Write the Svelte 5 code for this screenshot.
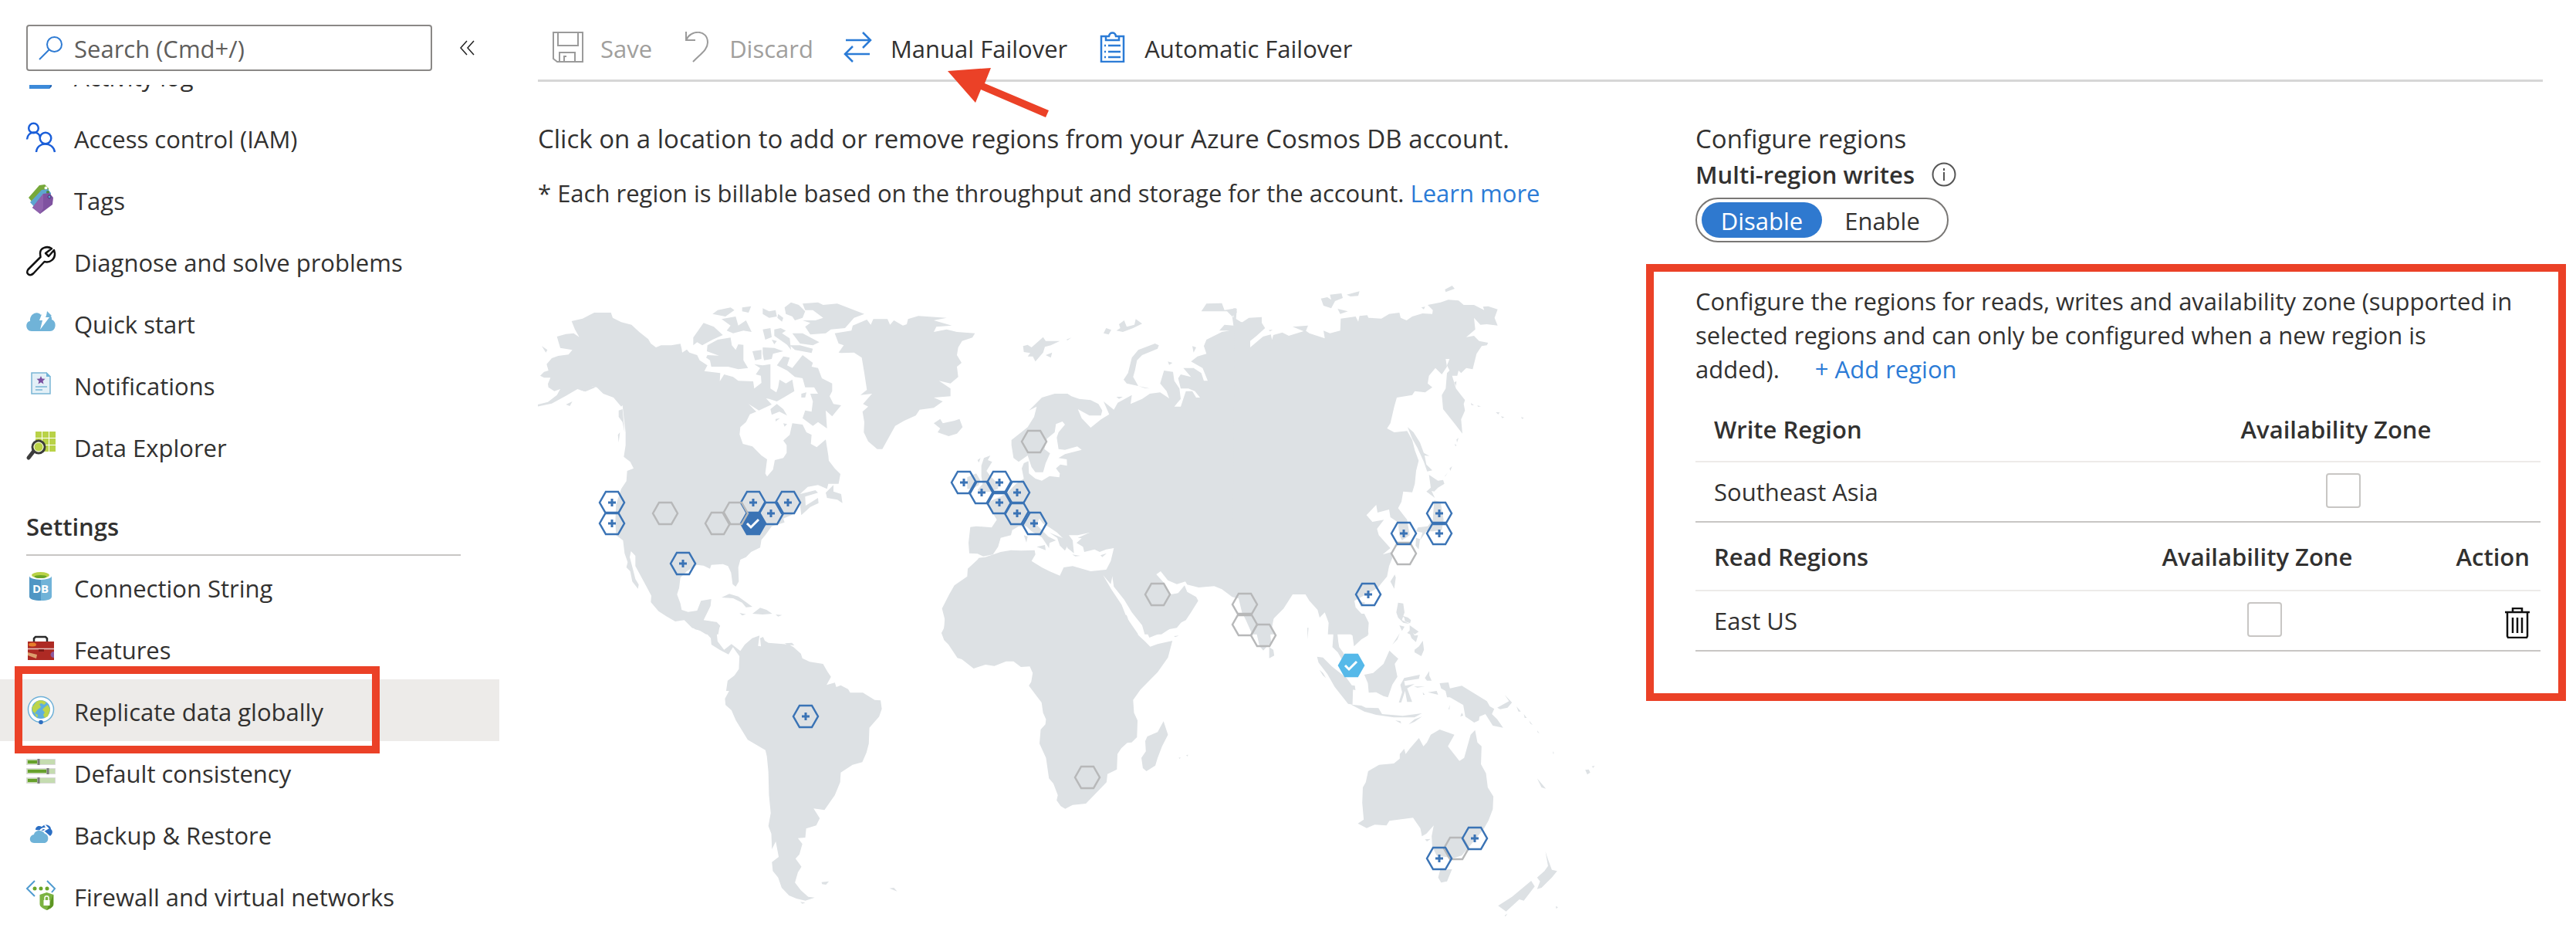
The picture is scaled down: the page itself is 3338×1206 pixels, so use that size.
<script>
  const general = [
    { icon: 'log', label: 'Activity log' },
    { icon: 'iam', label: 'Access control (IAM)' },
    { icon: 'tags', label: 'Tags' },
    { icon: 'wrench', label: 'Diagnose and solve problems' },
    { icon: 'cloud', label: 'Quick start' },
    { icon: 'note', label: 'Notifications' },
    { icon: 'explorer', label: 'Data Explorer' }
  ];
  const settings = [
    { icon: 'db', label: 'Connection String' },
    { icon: 'case', label: 'Features' },
    { icon: 'globe', label: 'Replicate data globally', active: true },
    { icon: 'sliders', label: 'Default consistency' },
    { icon: 'backup', label: 'Backup & Restore' },
    { icon: 'firewall', label: 'Firewall and virtual networks' }
  ];

  // Map canvas size and the markers on it: [x, y, kind]
  const mapW = 1436;
  const mapH = 846;
  const markers = [
    [96, 291, 'open'], [96, 318, 'open'], [165, 305, 'off'],
    [279, 291, 'open'], [302, 305, 'open'], [324, 291, 'open'], [279, 318, 'read'],
    [233, 318, 'off'], [256, 305, 'off'], [188, 370, 'open'],
    [552, 265, 'open'], [575, 278, 'open'], [598, 265, 'open'], [621, 278, 'open'],
    [598, 291, 'open'], [621, 305, 'open'], [643, 318, 'open'], [643, 212, 'off'],
    [803, 410, 'off'], [916, 423, 'off'], [916, 449, 'off'], [940, 463, 'off'],
    [1168, 305, 'open'], [1168, 331, 'open'], [1122, 357, 'off'], [1122, 331, 'open'],
    [1076, 410, 'open'], [347, 568, 'open'], [712, 647, 'off'], [1054, 502, 'write'],
    [1190, 739, 'off'], [1214, 726, 'open'], [1168, 752, 'open']
  ];

  let multi = $state('disable');
  let search = $state('');
</script>

{#snippet navIcon(name)}
  <svg class="nav-icon" viewBox="0 0 38 38" aria-hidden="true">
    {#if name === 'log'}
      <path fill="#3c8ad9" d="M4 2h29v30l-3 4H4z" /><path fill="#1f5fae" d="M30 36l1-4 2-1v2z" />
    {:else if name === 'iam'}
      <g fill="none" stroke="#1b5fd9" stroke-width="2.5">
        <circle cx="9.5" cy="7" r="6.3" /><path d="M1 21.500C2 10 17 10 18 19" />
        <circle cx="25" cy="20" r="7.300" /><path d="M13 38c1-14 22-14 24 0" />
      </g>
    {:else if name === 'tags'}
      <path fill="#76a83a" d="M3 17L17 1l7-1 5 5v10L12 28z" /><circle cx="25.500" cy="4.500" r="2" fill="#fff" />
      <path fill="#5ea5d0" d="M5 23L20 7l8-1 4 5v10L13 32z" /><circle cx="28" cy="10" r="2" fill="#4d8a3a" />
      <path fill="#7f52a0" d="M8 30l14-18 8-1 5 6-1 9-16 12z" /><path fill="#8f62ad" d="M8 30l14-18v19l-4 7z" /><circle cx="30" cy="16" r="2" fill="#5ea5d0" stroke="#4b2f77" />
    {:else if name === 'wrench'}
      <path fill="none" stroke="#111" stroke-width="2.500" stroke-linejoin="round" d="M33 3C27-1 18 2 18 9l.5 5L2.500 30c-4 5 2 10 7 5l14-15c8 2 14-4 13.500-11L36 5l-7 8-4-4z" />
    {:else if name === 'cloud'}
      <path fill="#70b3d8" d="M7 30C-1 30-2 18 5 17 4 7 15 3 19 9c6-5 15-1 14 6 7 2 6 15-2 15z" />
      <path fill="#fff" d="M22 3l-5 13h4l-3 12 12-16h-5l4-9z" /><path fill="#70b3d8" d="M27 4l6 6-7 1z" />
    {:else if name === 'note'}
      <path fill="#e3f0f7" stroke="#7ab5d5" stroke-width="1.500" d="M7 4h19l5 5v22H7z" /><path fill="#70b3d8" d="M26 3l6 6h-6z" />
      <path fill="#7a4fa0" d="M19 8l1.500 3.500 4 .3-3 2.700 1 4L19 16.300l-3.500 2.200 1-4-3-2.700 4-.3z" />
      <path stroke="#7ab5d5" stroke-width="1.500" d="M12 22h15M12 26h9" />
    {:else if name === 'explorer'}
      <path fill="#b9d247" d="M12 0h8v8h-8zM21 0h8v8h-8zM30 0h8v8h-8zM21 9h8v8h-8zM30 9h8v8h-8zM30 18h8v8h-8zM21 18h8v8h-8zM12 9h8v8h-8z" />
      <path stroke="#3c3c3c" stroke-width="5" stroke-linecap="round" d="M3 34l7-9" /><circle cx="16" cy="20" r="8" fill="#b9d247" stroke="#3c3c3c" stroke-width="3" /><circle cx="16" cy="20" r="6" fill="none" stroke="#fff" />
    {:else if name === 'db'}
      <path fill="#4f96c4" d="M4 5h15v32C10 37 4 35 4 32z" /><path fill="#70b3d8" d="M19 5h14v27c0 3-5 5-14 5z" />
      <ellipse cx="18.500" cy="5" rx="14.500" ry="5" fill="#fff" /><ellipse cx="18.500" cy="4" rx="11.500" ry="4" fill="#b9d247" /><ellipse cx="18.500" cy="6" rx="8" ry="2" fill="#6aa52a" />
      <text x="18.500" y="27" class="db-text" text-anchor="middle">DB</text>
    {:else if name === 'case'}
      <path fill="none" stroke="#2a2a2a" stroke-width="2.500" d="M10 12V6l2-2h13l2 2v6" /><path fill="#ae2a24" d="M2 10h34v24H2z" />
      <path stroke="#e8c7c5" stroke-width="1.500" d="M2 19.500h34" /><ellipse cx="8" cy="14" rx="5" ry="2.500" fill="#e77e2c" /><path fill="#dc9f6d" d="M2 24l12 3-1 5L2 28z" /><path fill="#8c5a9e" d="M36 23c-6 0-6 8 0 8z" /><path fill="#7d1a17" d="M16 20h7v3h-7z" />
    {:else if name === 'globe'}
      <circle cx="19" cy="18" r="16.500" fill="#fff" stroke="#6fb1d8" stroke-width="1.500" /><circle cx="19" cy="18" r="12" fill="#5eaede" />
      <path fill="#bcd54a" d="M13 8c4-3 10-2 13 1l-3 3-3-2-3 1 2 4-4 3-4 5-3-3-.5-5zM28 12l3 6-3 9-4 2-2-4 2-3-3-4 3-3z" /><path fill="#bcd54a" d="M11 23l4 2-1 4z" />
      <circle cx="19" cy="34.500" r="2.800" fill="#2f6fc0" />
    {:else if name === 'sliders'}
      <path fill="#c5dcb0" stroke="#d9d9d9" d="M.5 2.500h37v7H.5zM.5 14.500h37v7H.5zM.5 26.500h37v7H.5z" />
      <path fill="#66a02c" d="M2 4h12v4H2zM2 16h24v4H2zM2 28h12v4H2z" /><path stroke="#7b7b7b" stroke-width="3" d="M16 2v8M28 14v8M16 26v8" />
    {:else if name === 'backup'}
      <path fill="#2b6fc4" d="M12 14c0-5 5-6 8-4 5-5 12-2 12 3 3 2 2 7-1 9l-8-7z" /><path fill="none" stroke="#fff" stroke-width="2" d="M17 18c1-5 5-7 11-6M24 8l4 4-5 3" />
      <path fill="#6fb3d8" d="M10 31c-7 0-7-10 0-11 1-6 11-7 14-1 6 1 6 12-1 12z" />
    {:else if name === 'firewall'}
      <path fill="none" stroke="#4f9bd0" stroke-width="2" d="M11 0L1 10l10 10M27 0l10 10-4 5" /><g fill="#6aa52a"><circle cx="11" cy="10" r="2.500" /><circle cx="19" cy="10" r="2.500" /><circle cx="27" cy="10" r="2.500" /></g>
      <path fill="#7cb342" d="M26.500 15l9 3v12c0 4-5 6-9 8-4-2-9-4-9-8V18z" /><path fill="#5d9522" d="M35 18v12c0 4-4 6-8.500 8z" /><path fill="#fff" d="M22.500 25h8v7h-8z" /><path fill="none" stroke="#fff" stroke-width="1.500" d="M24 25v-3c0-3 5-3 5 0v3" />
    {/if}
  </svg>
{/snippet}

{#snippet navItem(item)}
  <li class:active={item.active}>
    <a href="#{item.icon}" aria-current={item.active ? 'page' : undefined}>{@render navIcon(item.icon)}<span>{item.label}</span></a>
    {#if item.active}<span class="outline"></span>{/if}
  </li>
{/snippet}

<div class="page">
  <aside>
    <div class="search-row">
      <label class="search">
        <svg viewBox="0 0 32 32" aria-hidden="true"><g fill="none" stroke="#2f7bd3" stroke-width="2"><circle cx="20.500" cy="11.500" r="9.500" /><path d="M14 18L1 31" /></g></svg>
        <input type="text" placeholder="Search (Cmd+/)" aria-label="Search" bind:value={search} />
      </label>
      <button class="collapse" aria-label="Collapse menu">
        <svg viewBox="0 0 20 20" aria-hidden="true"><path fill="none" stroke="#222" stroke-width="1.500" d="M9 1L1 10l8 9M18 1l-8 9 8 9" /></svg>
      </button>
    </div>
    <nav>
      <ul class="general">
        {#each general as item}{@render navItem(item)}{/each}
      </ul>
      <h2>Settings</h2>
      <ul>
        {#each settings as item}{@render navItem(item)}{/each}
      </ul>
    </nav>
  </aside>

  <main>
    <div class="toolbar">
      <button disabled>
        <svg viewBox="0 0 40 40" aria-hidden="true"><g fill="none" stroke="#9b9b9b" stroke-width="2"><path d="M1 1h38v38H6l-5-4zM7 1v17h26V1M9 39V27h20v12M15 39v-7h3" /></g></svg>
        <span>Save</span>
      </button>
      <button disabled>
        <svg viewBox="0 0 40 40" aria-hidden="true"><path fill="none" stroke="#9b9b9b" stroke-width="2" d="M6 0v11h12M6 11c6-14 28-14 28 3 0 9-8 14-19 25" /></svg>
        <span>Discard</span>
      </button>
      <button>
        <svg viewBox="0 0 40 40" aria-hidden="true"><path fill="none" stroke="#2b7bd6" stroke-width="2.500" d="M4 11h32M26 1l10 10-10 10M35 29H3M13 19L3 29l10 10" /></svg>
        <span>Manual Failover</span>
        <svg class="arrow" viewBox="0 0 132 66" aria-hidden="true"><path fill="#eb4127" d="M0 5L56 1l-8 20 83 35-4 9-84-36-7 17z" /></svg>
      </button>
      <button>
        <svg viewBox="0 0 40 40" aria-hidden="true"><g fill="none" stroke="#2b7bd6" stroke-width="2.500"><path d="M14 6H6v33h29V6h-8M12 6v5h17V6h-4c-1-6-8-6-9 0zM15 18h16M15 26h16M15 33h16M10 18h2M10 26h2M10 33h2" /></g></svg>
        <span>Automatic Failover</span>
      </button>
    </div>

    <div class="columns">
      <section class="map-side">
        <p class="lead">Click on a location to add or remove regions from your Azure Cosmos DB account.</p>
        <p class="note">* Each region is billable based on the throughput and storage for the account. <a href="#learn">Learn more</a></p>
        <div class="map">
          <svg class="world" viewBox="7 0 {mapW} {mapH}" role="img" aria-label="World map">
            <!-- North America and Greenland -->
            <g transform="scale(.33333)">
              <path d="M18 500L20 492 60 482 95 455 108 432 85 440 62 425 60 412 70 388 45 388 30 380 45 365 62 360 55 335 75 312 100 303 140 298 155 280 108 272 95 228 130 218 160 215 182 230 165 200 152 168 195 158 240 135 305 135 312 155 345 172 385 182 415 210 450 238 460 255 480 270 500 262 540 262 575 256 580 275 582 290 600 278 610 290 640 300 650 320 680 340 668 362 730 370 728 402 745 375 780 385 800 400 858 402 862 430 890 408 888 380 868 375 885 350 862 335 895 340 925 335 925 395 925 430 948 445 955 425 960 395 985 410 1010 395 1018 440 985 460 950 480 920 470 908 468 930 492 880 515 840 490 870 520 845 530 830 560 808 580 805 608 818 645 855 655 890 690 912 705 905 760 912 772 935 745 942 708 975 700 988 680 988 650 975 632 1000 610 1010 565 1050 570 1065 600 1085 610 1082 645 1105 658 1140 628 1150 690 1152 710 1175 740 1197 762 1190 800 1150 800 1145 820 1110 805 1070 812 1040 840 1100 825 1110 835 1060 850 1062 885 1110 855 1112 875 1080 890 1045 922 1040 880 1010 920 975 935 980 950 930 965 905 1000 890 1018 885 1048 850 1065 830 1085 808 1095 800 1125 802 1180 790 1200 778 1190 772 1145 760 1120 740 1112 695 1115 690 1130 665 1118 640 1115 600 1140 575 1165 570 1205 562 1230 575 1265 580 1290 605 1298 640 1293 655 1255 695 1248 692 1275 680 1300 665 1330 700 1335 728 1350 722 1385 675 1385 650 1370 620 1360 590 1330 555 1335 520 1315 490 1295 460 1260 462 1235 430 1175 400 1120 400 1080 383 1062 378 1085 390 1130 400 1170 413 1192 410 1208 388 1180 380 1140 365 1125 370 1105 358 1070 352 1020 325 1000 322 950 325 880 345 820 365 790 368 750 393 740 380 715 355 695 362 650 362 600 355 540 350 495 345 500 315 465 275 450 250 425 225 420 200 440 175 432 130 458 75 488Z" />
              <path d="M625 262L625 232 665 175 705 190 740 222 700 240 660 262 640 250ZM680 262L720 240 770 232 775 262 790 280 800 258 820 260 820 320 838 350 800 355 760 345 695 345 690 320 675 310 680 300 725 302 678 285ZM700 140L720 125 770 115 785 125 750 150ZM735 160L790 150 800 185 830 165 852 210 820 205 780 215 755 205 770 185ZM815 115L850 110 840 135 815 130ZM895 118L920 130 945 125 950 150 920 155 895 140ZM980 115L1005 95 1035 105 1060 130 1050 155 1020 165 1010 150 985 140ZM1050 100L1110 95 1130 105 1185 100 1290 140 1250 155 1215 195 1160 200 1140 215 1080 220 1060 190 1080 175 1050 165 1100 165 1130 155 1090 125 1060 125ZM1010 215L1050 215 1115 250 1090 262 1040 255ZM1000 262L1040 262 1090 275 1085 292 1020 280ZM965 195L985 205 970 215 1000 235 1005 280 990 260 940 225 940 200ZM895 200L925 195 930 230 905 240ZM855 285L890 280 890 315 865 320ZM895 270L940 272 975 285 935 295 930 315 900 320 895 295ZM930 240L950 245 940 258ZM955 140L975 155 970 170 952 155Z" />
              <path d="M950 340L975 305 1000 310 990 340 1010 350 1050 300 1090 330 1085 345 1110 350 1125 390 1165 410 1165 440 1155 460 1170 490 1200 495 1165 538 1140 515 1145 585 1110 560 1090 575 1050 545 1060 515 1085 520 1090 480 1080 450 1110 450 1095 425 1060 425 1050 390 1020 385 990 360ZM925 510L950 490 975 510 990 535 960 520 930 532ZM1045 450L1065 445 1060 465 1045 465ZM945 548L962 545 945 558ZM975 565L990 568 980 578ZM1140 835L1170 805 1170 830 1200 840 1205 875 1185 862 1145 855Z" />
              <path d="M735 1242L765 1228 800 1238 855 1278 830 1280 815 1262 780 1245ZM855 1305L885 1282 910 1290 932 1305 895 1308ZM805 1302L830 1307 815 1312ZM945 1308L970 1310 955 1316ZM185 435L215 415 245 425 205 442ZM130 492L155 480 145 498ZM36 265L58 280 52 290ZM335 515L350 510 358 600 350 560 335 540ZM332 610L340 600 335 640Z" />
              <path d="M1190 290L1210 262 1190 255 1175 215 1240 205 1245 185 1300 162 1315 182 1325 160 1380 160 1390 182 1405 165 1440 185 1455 180 1460 160 1500 148 1610 155 1560 165 1630 185 1570 190 1560 210 1610 200 1650 210 1720 215 1710 232 1670 245 1655 270 1650 300 1668 330 1650 345 1655 385 1625 410 1580 400 1625 430 1625 460 1560 465 1595 480 1560 505 1505 512 1490 535 1445 555 1410 575 1385 620 1360 665 1340 665 1305 635 1288 600 1290 560 1283 520 1305 500 1285 490 1320 450 1275 455 1300 435 1290 370 1280 310 1250 290 1200 292Z" />
            </g>
            <!-- Europe, western Asia and northern Africa -->
            <g transform="translate(460) scale(.33333)">
              <path d="M318 1070L315 1030 322 968 345 965 405 970 425 940 410 915 385 880 405 865 440 850 470 830 500 800 530 780 522 740 530 720 548 712 550 760 575 780 600 788 630 770 668 775 670 760 655 740 672 725 698 730 697 705 665 700 690 685 755 668 738 655 690 668 665 665 658 620 665 600 690 570 680 558 655 568 650 600 620 625 610 665 632 682 615 720 605 755 575 755 560 735 545 690 510 715 490 700 482 650 482 630 520 600 545 580 570 540 580 500 550 515 600 465 650 450 700 450 715 460 745 470 790 475 820 490 835 515 830 535 785 535 740 510 755 545 790 582 830 550 862 530 840 480 880 512 895 485 950 455 945 490 990 470 1020 450 1060 445 1095 468 1085 440 1060 410 1075 360 1110 365 1115 400 1135 430 1140 470 1115 500 1140 500 1160 440 1185 440 1200 465 1215 465 1195 440 1170 430 1140 430 1130 390 1140 375 1180 385 1150 350 1190 350 1220 370 1230 400 1245 400 1225 350 1180 325 1205 305 1240 295 1230 265 1240 240 1300 210 1330 205 1290 205 1310 182 1345 185 1340 150 1380 175 1400 165 1400 1340 1378 1300 1365 1245 1340 1240 1300 1210 1270 1198 1210 1203 1165 1192 1158 1180 1125 1190 1090 1175 1062 1140 1045 1152 1075 1185 1100 1230 1130 1225 1155 1195 1165 1220 1200 1240 1208 1255 1180 1300 1160 1330 1110 1355 1065 1385 1000 1385 990 1350 950 1300 920 1250 880 1200 874 1160 850 1135 868 1100 880 1050 850 1055 825 1065 805 1055 765 1065 760 1045 735 1030 755 1012 740 1010 785 990 740 1000 705 1000 720 1020 725 1070 700 1050 690 1020 660 990 630 970 605 955 590 935 580 960 625 1005 655 1020 630 1030 628 1050 600 1008 560 985 540 965 510 965 485 980 480 1000 440 1010 430 1045 410 1075 372 1082 350 1072Z" />
              <path d="M355 1088L380 1085 440 1065 480 1058 520 1060 572 1058 575 1075 560 1100 600 1125 630 1140 670 1157 685 1125 720 1120 790 1140 855 1133 874 1160 868 1190 838 1155 870 1210 910 1270 930 1320 975 1385 215 1385 225 1335 212 1285 240 1230 260 1195 310 1160 312 1130 350 1095Z" />
              <path d="M365 730L375 700 400 690 390 708 407 715 385 750 400 770 430 800 430 820 400 830 370 835 350 825 370 800 365 770ZM310 820L310 775 345 760 360 785 355 805 330 820ZM350 708L362 700 355 718ZM180 565L205 548 215 565 260 555 280 548 292 580 270 605 238 615 195 600 205 585ZM918 395L935 370 950 310 975 280 1040 255 1055 262 1050 275 990 300 970 320 962 360 955 385 975 420 930 410ZM975 420L1020 430 1000 428ZM527 265L545 260 560 270 605 230 615 245 670 245 635 262 612 268 605 290 575 325 565 305 545 305 555 292 530 288ZM615 300L640 290 635 310ZM695 240L715 232 700 242ZM840 215L850 195 870 202 860 220ZM890 205L905 195 900 180 920 165 930 190 960 182 965 160 990 178 955 195 915 210ZM1220 130L1240 100 1300 98 1310 125 1355 118 1358 135 1340 150 1320 130 1270 130ZM1090 325L1108 330 1095 338ZM1185 265L1200 270 1190 290ZM580 1045L612 1038 615 1058ZM530 1000L545 1005 540 1028ZM718 1075L750 1080 730 1082ZM828 1078L852 1070 835 1085ZM890 462L915 462 900 470ZM630 990L660 1010 670 1040 690 1060 700 1040 690 1015Z" />
            </g>
            <!-- Eastern Asia -->
            <g transform="translate(910) scale(.33333)">
              <path d="M0 172L30 172 55 155 105 152 105 175 118 195 85 225 60 245 60 270 110 228 140 220 145 240 150 222 185 212 210 225 275 205 290 215 350 235 345 205 370 215 410 205 412 158 470 150 480 170 485 148 515 145 520 155 570 158 600 140 640 135 645 155 668 165 690 150 730 138 768 140 770 125 750 105 800 95 830 85 870 88 890 105 930 105 970 125 965 112 985 110 1022 122 1010 155 1022 185 980 180 955 182 930 155 935 200 900 230 930 225 950 245 985 252 980 262 960 265 940 295 925 355 900 350 880 370 870 360 865 380 845 380 860 430 895 475 890 490 895 515 880 550 885 605 850 560 810 510 805 455 820 430 825 370 835 360 825 340 835 315 820 315 825 345 805 375 780 350 755 380 750 410 768 425 740 445 700 440 690 455 630 465 620 500 605 565 592 585 620 600 670 595 690 630 700 670 715 710 705 750 700 800 690 833 655 830 648 870 635 895 670 940 680 1000 650 1020 640 1000 635 950 605 930 600 900 555 912 550 882 512 922 535 948 580 940 553 975 560 1000 605 1050 575 1075 610 1065 612 1090 600 1120 592 1160 555 1205 520 1225 465 1255 470 1280 515 1330 520 1385 362 1385 365 1340 350 1300 330 1320 322 1290 290 1255 275 1230 225 1230 190 1285 150 1325 143 1350 155 1385 68 1385 30 1300 18 1245 -10 1238Z" />
              <path d="M335 80L360 75 375 85 370 65 415 60 420 78 390 90 375 118 345 108ZM435 65L485 52 480 70 450 72ZM400 120L440 130 410 140ZM817 45L845 30 855 42 820 55ZM725 115L740 112 735 122ZM225 190L285 185 275 210ZM-5 118L8 120 5 160 -5 160ZM132 203L147 201 138 208ZM672 580L695 600 720 640 735 680 757 692 738 690 745 725 768 748 748 752 735 715 710 660 690 625ZM755 765L790 788 810 785 815 800 790 815 775 830 798 835 765 828 778 855 745 830 762 815ZM775 865L800 870 812 940 805 980 770 985 745 985 720 1020 730 990 705 985 712 970 750 965 770 940ZM705 1010L720 1015 715 1055 703 1040ZM605 1180L622 1153 626 1165 620 1208ZM480 1255L508 1262 490 1278ZM635 1262L655 1265 660 1300 650 1330 680 1345 655 1340 635 1320 628 1300ZM640 1350L660 1355 650 1372ZM680 1350L715 1375 700 1385 680 1370ZM918 486L930 495 920 494ZM943 496L957 499 946 501ZM1015 522L1030 523 1024 530ZM1035 538L1048 541 1040 545ZM1113 541L1124 544 1117 548ZM862 628L870 622 864 640ZM855 645L862 650 858 655ZM835 740L845 732 838 750ZM817 770L828 756 818 772ZM853 405L862 402 860 420Z" />
            </g>
            <!-- South America and southern Africa -->
            <g transform="translate(210 440) scale(.3827 .33333)">
              <path d="M0-10L35-10 30 12 75 17 87 32 75 60 78 92 100 125 125 103 155 130 170 105 195 80 220 70 215 110 225 112 222 80 232 75 238 90 250 98 320 105 335 115 360 140 365 158 390 172 435 180 450 210 462 230 447 262 475 253 480 270 495 263 520 278 527 292 570 292 610 320 630 322 634 355 625 385 592 428 590 490 582 525 568 562 535 572 495 602 493 640 475 690 440 748 403 742 424 780 412 808 378 820 375 855 350 857 365 880 355 920 342 937 362 968 350 990 340 1030 360 1060 385 1085 407 1088 375 1100 345 1092 320 1080 295 1050 283 1010 265 985 262 950 285 930 275 870 262 900 260 840 250 810 258 760 252 690 250 600 245 540 240 515 180 475 140 400 125 360 105 340 103 315 117 285 107 285 112 245 135 225 150 200 152 150 130 115 115 143 85 125 57 105 55 80 35 55 0 45ZM358 1105L375 1108 365 1112ZM430 1028L455 1025 445 1038 432 1036ZM660 1052L675 1050 686 1064ZM305 100L330 98 338 108 315 106Z" />
              <path d="M848-10L845 40 836 60 845 88 860 105 890 157 905 162 945 198 985 183 1015 188 1055 170 1080 170 1105 192 1135 190 1145 215 1140 250 1132 265 1155 300 1175 330 1180 370 1190 395 1188 415 1172 435 1168 490 1190 545 1200 625 1215 645 1230 690 1226 710 1240 733 1255 743 1280 728 1325 723 1395 640 1398 608 1430 590 1432 530 1445 508 1465 487 1480 485 1498 465 1500 400 1488 370 1485 320 1510 280 1568 212 1603 155 1618 90 1568 103 1543 113 1525 92 1500 65 1478 38 1463-10ZM1510-10L1525 40 1540 78 1568 65 1608 45 1633 40 1668-10ZM1533 462L1568 445 1588 403 1603 455 1583 500 1568 545 1560 575 1530 597 1518 585 1513 545 1528 520 1526 480Z" />
            </g>
            <!-- Southern Asia and Oceania -->
            <g transform="translate(810 440) scale(.3827 .33333)">
              <path d="M295-20L335 60 345 110 358 128 372 110 385 100 382 70 397-20ZM378 115L392 125 395 148 378 158ZM575-15L593 40 595 70 592 115 610 135 630 175 655 215 645 175 628 135 615 115 612 95 607 40 620 40 640 55 660 70 665 112 690 85 712 70 715 20 700-15ZM540 152L560 155 590 190 640 235 662 270 660 338 645 335 600 270 575 220 545 175ZM652 262L668 265 670 282 655 278ZM655 338L690 342 705 350 748 352 760 375 830 382 895 372 870 388 800 388 740 378 700 365ZM805 400L822 402 825 412ZM850 415L870 395 895 385 870 405ZM700 222L730 215 765 180 785 128 800 145 815 160 803 180 812 230 795 260 780 310 765 305 740 290 715 292 712 255ZM822 262L835 235 888 222 885 238 835 247 838 265 870 258 845 275 862 328 845 328 838 285 825 330 817 330 828 290ZM905 235L920 208 920 225 928 245 912 245ZM868 268L905 268 880 272ZM915 290L945 285 950 300ZM898 290L905 300 899 300ZM955 255L985 252 990 275 1030 265 1115 325 1125 345 1140 355 1132 375 1150 395 1170 428 1135 420 1110 375 1090 385 1088 400 1072 408 1042 385 1035 340 990 310 980 310 975 285 960 275ZM1150 350L1190 325 1175 300 1200 330 1185 350 1160 356ZM1215 345L1230 365 1222 365ZM1240 375L1250 390 1243 390ZM1258 400L1270 418 1262 412ZM1285 438L1293 450 1287 446ZM822-10L835 0 838 15 855 22 858 10 848 0ZM845 60L858 45 870 70 882 68 875 95 860 80 855 65ZM795 105L815 70 820 60 812 85ZM870 125L885 112 898 90 902 125 893 150 870 135ZM1025 385L1030 370 1035 380ZM985 355L990 340 988 358ZM507 40L511 40 508 85ZM548 203L560 215 570 235 560 225ZM55 72L72 70 60 76Z" />
              <path d="M678 800L698 785 693 720 695 660 705 640 713 597 750 572 800 567 820 548 820 530 835 510 840 530 855 508 885 468 900 500 912 485 925 455 955 435 1005 455 983 500 1022 557 1038 545 1060 455 1075 437 1083 485 1097 500 1095 570 1112 605 1118 660 1137 695 1135 745 1120 790 1105 820 1070 870 1055 890 1030 925 1000 935 975 930 945 925 930 890 928 850 935 808 910 840 895 850 890 820 865 778 785 790 775 808 735 805 708 818ZM905 862L925 860 912 870ZM957 980L997 978 980 1025 960 1030 950 1010ZM1313 908L1322 940 1335 980 1353 985 1335 1010 1300 1050 1285 1055 1295 1025 1285 1010 1310 985 1322 965ZM1265 1023L1277 1045 1240 1100 1225 1095 1180 1142 1153 1120 1200 1085ZM1285 625L1315 665 1300 660ZM1448 592L1460 590 1465 602 1455 610ZM1470 578L1480 576 1475 584ZM1348 1122L1356 1125 1350 1132ZM1175 1158L1185 1150 1178 1162ZM1338 520L1342 525 1340 532ZM97 534L104 533 100 540ZM71 545L78 543 75 549Z" />
            </g>
          </svg>
          {#each markers as [x, y, kind]}
            <button class="marker {kind}" style="left:{(x / mapW) * 100}%;top:{(y / mapH) * 100}%" aria-label="Region" disabled={kind === 'off'}>
              <svg viewBox="-18 -17 36 34" aria-hidden="true">
                <path class="hex" d="M-16 0L-8-14H8L16 0 8 14H-8Z" />
                {#if kind === 'open'}<path class="plus" d="M-5 0H5M0-5V5" />{/if}
                {#if kind === 'read' || kind === 'write'}<path class="tick" d="M-8 0l5 5L7-5" />{/if}
              </svg>
            </button>
          {/each}
        </div>
      </section>

      <section class="config">
        <div class="config-head">
          <h3>Configure regions</h3>
          <div class="multi">
            <strong id="multi-label">Multi-region writes</strong>
            <svg viewBox="0 0 32 32" aria-hidden="true"><circle cx="16" cy="16" r="14.500" fill="none" stroke="#555" stroke-width="2" /><path stroke="#555" stroke-width="2" d="M16 13v11M16 8v3" /></svg>
          </div>
          <div class="toggle" role="group" aria-labelledby="multi-label">
            <button class:on={multi === 'disable'} aria-pressed={multi === 'disable'} onclick={() => (multi = 'disable')}>Disable</button>
            <button class:on={multi === 'enable'} aria-pressed={multi === 'enable'} onclick={() => (multi = 'enable')}>Enable</button>
          </div>
        </div>

        <div class="regions">
          <p>
            Configure the regions for reads, writes and availability zone (supported in selected regions and can only be configured when a new region is
            <span class="keep">added).<a class="add-link" href="#add">+ Add region</a></span>
          </p>
          <table class="write-table">
            <thead><tr><th>Write Region</th><th class="zone">Availability Zone</th></tr></thead>
            <tbody><tr><td>Southeast Asia</td><td class="zone"><input type="checkbox" aria-label="Availability zone, Southeast Asia" /></td></tr></tbody>
          </table>
          <table class="read-table">
            <thead><tr><th>Read Regions</th><th class="zone">Availability Zone</th><th class="action">Action</th></tr></thead>
            <tbody>
              <tr>
                <td>East US</td>
                <td class="zone"><input type="checkbox" aria-label="Availability zone, East US" /></td>
                <td class="action">
                  <button aria-label="Delete East US">
                    <svg viewBox="0 0 32 40" aria-hidden="true"><path fill="none" stroke="#111" stroke-width="2.500" d="M0 6h32M10 6V1h12v5M3 6v31l1 2h24l1-2V6M10 13v20M16 13v20M22 13v20" /></svg>
                  </button>
                </td>
              </tr>
            </tbody>
          </table>
        </div>
      </section>
    </div>
  </main>
</div>

<style>
  :global(body) { background: #fff; }
  .page, .page * { box-sizing: border-box; }
  .page {
    display: grid;
    grid-template-columns: 647px 1fr;
    height: 100vh;
    overflow: hidden;
    color: #323130;
    font: 31px/44px "Open Sans", "Noto Sans", sans-serif;
  }
  button, input { font: inherit; color: inherit; }
  button { background: none; border: 0; padding: 0; cursor: pointer; }
  a { color: #2b7bd6; text-decoration: none; }
  p, h2, h3, ul { margin: 0; padding: 0; }
  ul { list-style: none; }

  aside { display: flex; flex-direction: column; min-height: 0; }
  .search-row { display: flex; align-items: center; gap: 36px; padding: 32px 0 18px 34px; }
  .search {
    display: flex; align-items: center; gap: 14px;
    width: 526px; height: 60px; padding: 0 14px;
    border: 2px solid #8a8886; border-radius: 4px;
  }
  .search svg { width: 32px; height: 32px; }
  .search input { flex: 1; min-width: 0; border: 0; outline: 0; padding: 2px 0 0; background: none; }
  .search input::placeholder { color: #605e5c; opacity: 1; }
  .collapse { display: flex; }
  .collapse svg { width: 20px; height: 20px; }

  nav { flex: 1; min-height: 0; overflow: hidden; }
  .general { margin-top: -52px; }
  li { position: relative; }
  li a { display: flex; align-items: center; gap: 24px; height: 80px; padding-left: 34px; color: inherit; }
  li a span, .toolbar button span { padding-top: 4px; }
  .active { background: #edebe9; }
  .nav-icon { width: 38px; height: 38px; overflow: visible; }
  .db-text { font-size: 15px; font-weight: 700; fill: #fff; }
  .outline { position: absolute; left: 19px; top: -17px; width: 473px; height: 113px; border: 10px solid #eb4127; pointer-events: none; }
  h2 { margin: 0 50px 0 34px; height: 102px; padding-top: 42px; border-bottom: 2px solid #c8c6c4; font-size: 31px; line-height: 44px; font-weight: 600; }

  main { min-width: 0; padding-left: 50px; }
  .toolbar { display: flex; align-items: center; gap: 38px; height: 106px; margin-right: 43px; padding: 18px 0 0 19px; border-bottom: 3px solid #d6d6d6; }
  .toolbar button { position: relative; display: flex; align-items: center; gap: 22px; white-space: nowrap; }
  .toolbar button:disabled { color: #a19f9d; }
  .toolbar svg { width: 40px; height: 40px; }
  .toolbar .arrow { position: absolute; left: 136px; top: 50px; width: 132px; height: 66px; z-index: 1; }

  .columns { display: grid; grid-template-columns: 1436fr 1205fr; }
  .lead { padding-top: 50px; font-size: 33px; line-height: 48px; white-space: nowrap; }
  .note { padding-top: 24px; white-space: nowrap; }
  .map { position: relative; margin-top: 88px; }
  .world { display: block; width: 100%; fill: #dde1e4; }
  .marker { position: absolute; width: 36px; height: 34px; transform: translate(-50%, -50%); }
  .marker svg { display: block; width: 36px; height: 34px; }
  .hex { fill: none; stroke: #3a73b5; stroke-width: 2.5; }
  .off .hex { stroke: #b7b8b9; }
  .plus { stroke: #3a73b5; stroke-width: 3; }
  .tick { fill: none; stroke: #fff; stroke-width: 3; }
  .read .hex { fill: #3a73b5; }
  .write .hex { fill: #56b9e9; stroke: #56b9e9; }

  .config { padding-right: 13px; }
  .config-head { padding: 50px 0 0 64px; }
  h3 { font-size: 33px; line-height: 48px; font-weight: 400; }
  .multi { display: flex; align-items: center; gap: 22px; line-height: 44px; }
  .multi strong { font-weight: 600; }
  .multi svg { width: 32px; height: 32px; }
  .toggle { display: inline-flex; align-items: center; height: 58px; margin-top: 8px; padding: 0 6px; border: 2px solid #797775; border-radius: 29px; vertical-align: top; }
  .toggle button { width: 156px; height: 46px; padding-top: 2px; line-height: 44px; border-radius: 23px; }
  .toggle .on { background: #2f79cf; color: #fff; }
  .regions { margin-top: 28px; padding: 16px 23px 54px 54px; border: 10px solid #eb4127; }
  .keep { white-space: nowrap; }
  .add-link { margin-left: 46px; }

  table { width: 100%; border-collapse: collapse; table-layout: fixed; }
  .write-table { margin-top: 14px; }
  th, td { padding: 0 0 0 24px; text-align: left; font-weight: 400; }
  th { height: 84px; font-weight: 600; border-bottom: 2px solid #edebe9; }
  td { height: 78px; border-bottom: 2px solid #c8c6c4; }
  td.zone { padding: 0 0 4px; }
  th.zone { padding: 0 18px 0 0; text-align: center; }
  .write-table .zone { width: 512px; }
  .read-table th { height: 88px; }
  .read-table .zone { width: 360px; }
  .read-table .action { width: 178px; padding: 0 14px 0 0; text-align: right; }
  td input { appearance: none; display: block; width: 45px; height: 45px; margin: 0 auto; border: 2px solid #c8c6c4; border-radius: 4px; background: #fff; }
  .action button { display: inline-flex; vertical-align: middle; }
  .action svg { width: 32px; height: 40px; }
</style>
